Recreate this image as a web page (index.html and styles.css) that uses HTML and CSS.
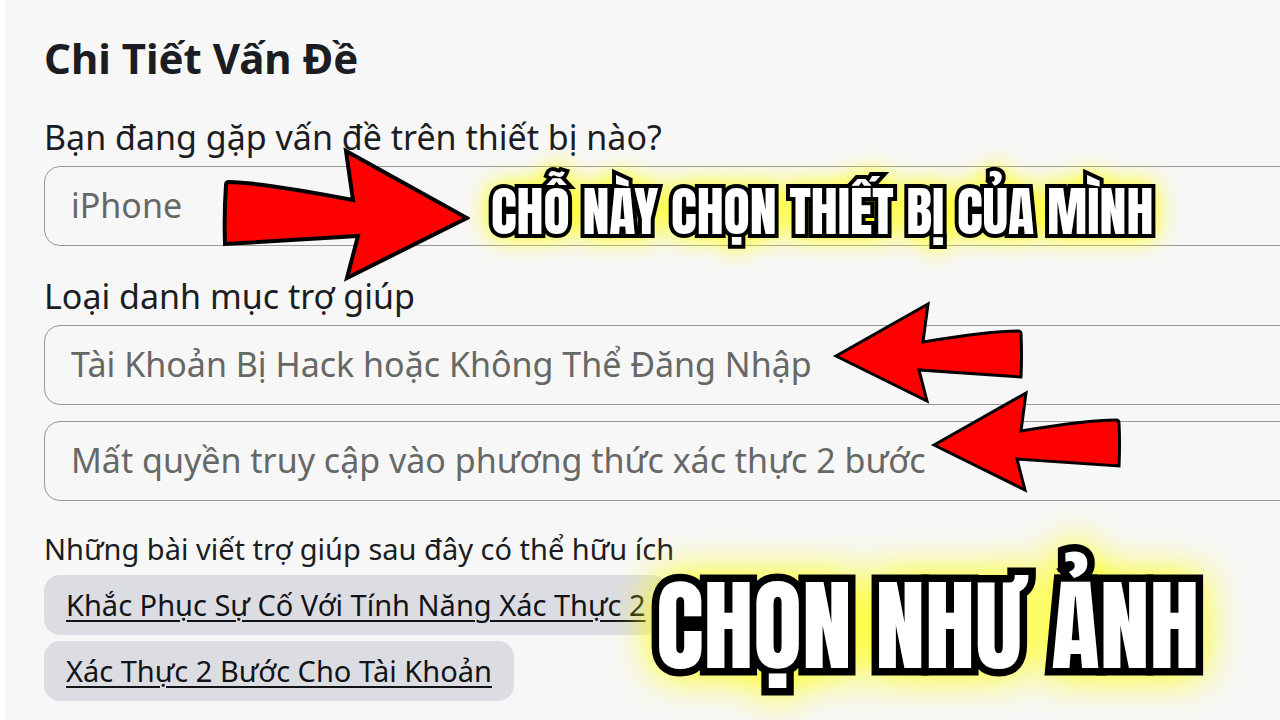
FILE: index.html
```
<!DOCTYPE html>
<html lang="vi">
<head>
    <meta charset="UTF-8">
    <meta name="viewport" content="width=device-width, initial-scale=1.0">
    <title>Chi Tiết Vấn Đề</title>
    <link rel="stylesheet" href="styles.css">
</head>
<body>
    <main class="page">
        <h1>Chi Tiết Vấn Đề</h1>
        <form class="form">
            <div class="field">
                <label for="device">Bạn đang gặp vấn đề trên thiết bị nào?</label>
                <select id="device">
                    <option>iPhone</option>
                </select>
            </div>
            <div class="field">
                <label for="category">Loại danh mục trợ giúp</label>
                <select id="category">
                    <option>Tài Khoản Bị Hack hoặc Không Thể Đăng Nhập</option>
                </select>
                <select id="subcategory" class="second" aria-label="Danh mục phụ">
                    <option>Mất quyền truy cập vào phương thức xác thực 2 bước</option>
                </select>
            </div>
        </form>
        <section class="articles">
            <p>Những bài viết trợ giúp sau đây có thể hữu ích</p>
            <a href="#">Khắc Phục Sự Cố Với Tính Năng Xác Thực 2</a>
            <a href="#">Xác Thực 2 Bước Cho Tài Khoản</a>
        </section>

        <!-- ghi chú hướng dẫn -->
        <svg class="arrow arrow-device" viewBox="0 0 250 136" aria-hidden="true">
            <path d="M6 39 Q6 36 9 36 Q45 37 133 54 L126 5 L247 72 L127 132 L138 90 L5 98 Q4 68 6 39 Z"/>
        </svg>
        <svg class="arrow arrow-category" viewBox="0 0 192 106" aria-hidden="true">
            <path d="M5 56 L97 4 L92 42 Q158 31 187 31 Q190 31 190 34 Q191 54 190 77 L88 70 L96 101 Z"/>
        </svg>
        <svg class="arrow arrow-subcategory" viewBox="0 0 192 106" aria-hidden="true">
            <path d="M5 56 L97 4 L92 42 Q158 31 187 31 Q190 31 190 34 Q191 54 190 77 L88 70 L96 101 Z"/>
        </svg>
        <div class="caption caption-device">CHỖ NÀY CHỌN THIẾT BỊ CỦA MÌNH</div>
        <div class="caption caption-photo">CHỌN NHƯ ẢNH</div>
    </main>
</body>
</html>
```
FILE: styles.css
```
* {
    box-sizing: border-box;
}

body {
    margin: 0;
    background-color: #fff;
    color: #1b1d22;
    font-family: "Noto Sans", sans-serif;
    overflow: hidden;
}

.page {
    position: relative;
    min-height: 100vh;
    margin-left: 5px;
    padding: 30px 0 16px 39px;
    background-color: #f7f7f7;
    overflow: hidden;
}

h1 {
    margin: 0 0 29px;
    font-size: 42px;
    line-height: 56px;
    font-weight: 700;
}

/* the fields run past the right edge */
.form {
    display: flex;
    flex-direction: column;
    gap: 28px;
    margin-right: -40px;
}

.field {
    display: flex;
    flex-direction: column;
}

label {
    margin-bottom: 7px;
    font-size: 34px;
    line-height: 44px;
}

select {
    width: 100%;
    height: 80px;
    padding: 0 26px 2px;
    border: 1px solid #999;
    border-radius: 16px;
    background-color: transparent;
    color: #656865;
    font-family: inherit;
    font-size: 34px;
    appearance: none;
}

.second {
    margin-top: 16px;
}

.articles {
    display: flex;
    flex-direction: column;
    align-items: flex-start;
    gap: 6px;
    margin-top: 28px;
}

.articles p {
    margin: 0;
    font-size: 29px;
    line-height: 40px;
}

.articles a {
    padding: 10px 22px;
    border-radius: 16px;
    background-color: #dcdde3;
    color: #121317;
    font-size: 29px;
    line-height: 40px;
    text-underline-offset: 4px;
    text-decoration-thickness: 2px;
}

.arrow {
    position: absolute;
    fill: #f00;
    stroke: #000;
    stroke-width: 3;
}

.arrow-device {
    left: 215px;
    top: 146px;
    width: 250px;
    stroke-width: 4;
}

.arrow-category {
    left: 826px;
    top: 300px;
    width: 192px;
}

.arrow-subcategory {
    left: 924px;
    top: 389px;
    width: 192px;
}

.caption {
    position: absolute;
    color: #fff;
    font-family: "Anton", "Roboto", sans-serif;
    font-weight: 400;
    white-space: nowrap;
    paint-order: stroke fill;
    -webkit-text-stroke: 8px #000;
    filter: drop-shadow(0 0 12px #ff0);
}

.caption-device {
    left: 486px;
    top: 173px;
    font-size: 54px;
    line-height: 76px;
}

.caption-photo {
    left: 651px;
    top: 558px;
    font-size: 100px;
    line-height: 136px;
    -webkit-text-stroke-width: 15px;
    filter: drop-shadow(0 0 20px #ff0);
}
```
